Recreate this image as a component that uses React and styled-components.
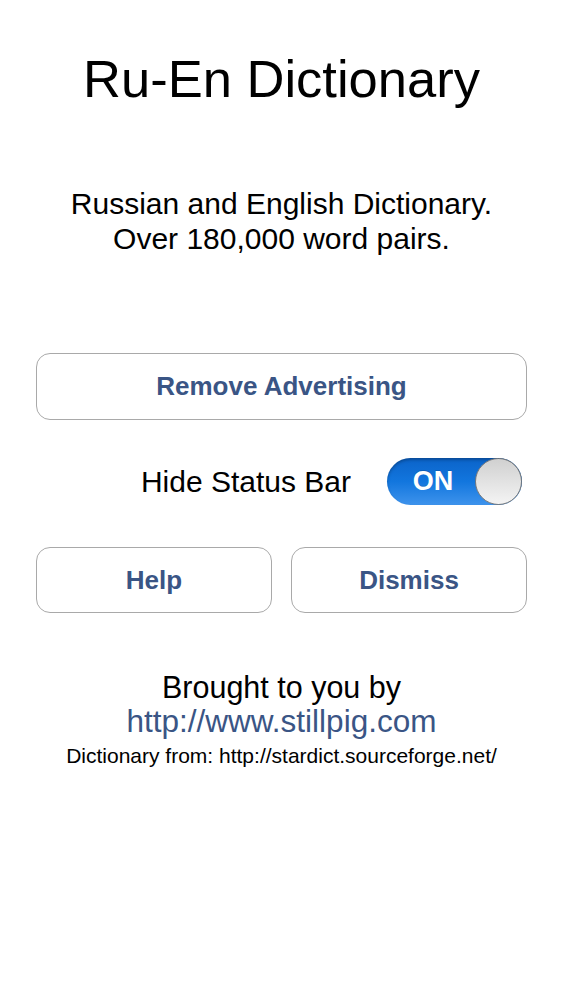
import React, { useState } from "react";
import styled, { createGlobalStyle } from "styled-components";

const GlobalStyle = createGlobalStyle`
  body {
    margin: 0;
    background: #fff;
    font-family: "Liberation Sans", Arial, Helvetica, sans-serif;
    color: #000;
  }
`;

const App = () => {
  const [hideBar, setHideBar] = useState(true);

  return (
    <>
      <GlobalStyle />
      <Page>
        <Title>Ru-En Dictionary</Title>
        <Subtitle>
          Russian and English Dictionary.
          <br />
          Over 180,000 word pairs.
        </Subtitle>
        <Actions>
          <RoundButton>Remove Advertising</RoundButton>
          <ToggleRow>
            <ToggleLabel>Hide Status Bar</ToggleLabel>
            <Switch $on={hideBar} onClick={() => setHideBar(!hideBar)}>
              <SwitchText>{hideBar ? "ON" : "OFF"}</SwitchText>
              <Knob />
            </Switch>
          </ToggleRow>
          <ButtonPair>
            <RoundButton $grow>Help</RoundButton>
            <RoundButton $grow>Dismiss</RoundButton>
          </ButtonPair>
        </Actions>
        <Credits>
          <CreditLine>Brought to you by</CreditLine>
          <Link>http://www.stillpig.com</Link>
          <SmallLine>Dictionary from: http://stardict.sourceforge.net/</SmallLine>
        </Credits>
      </Page>
    </>
  );
};

const Page = styled.div`
  display: flex;
  flex-direction: column;
  align-items: stretch;
  padding: 48px 36px 0;
  min-height: 1000px;
  box-sizing: border-box;
`;

const Title = styled.h1`
  margin: 0;
  text-align: center;
  font-size: 52.5px;
  font-weight: 400;
  line-height: 62px;
`;

const Subtitle = styled.p`
  margin: 76px 0 0;
  text-align: center;
  font-size: 30px;
  line-height: 35px;
`;

const Actions = styled.div`
  display: flex;
  flex-direction: column;
  margin-top: 97px;
`;

const RoundButton = styled.button`
  flex: ${(p) => (p.$grow ? 1 : "none")};
  height: 67px;
  border: 1.5px solid #a9a9a9;
  border-radius: 14px;
  background: #fff;
  color: #3a5585;
  font-family: "Liberation Sans", Arial, sans-serif;
  font-size: 26px;
  font-weight: 700;
  padding: 0;
  cursor: pointer;
`;

const ToggleRow = styled.div`
  display: flex;
  align-items: center;
  justify-content: flex-end;
  gap: 36px;
  margin-top: 38px;
  padding-right: 5px;
`;

const ToggleLabel = styled.span`
  font-size: 30px;
`;

const Switch = styled.div`
  position: relative;
  width: 135px;
  height: 47px;
  border-radius: 24px;
  box-sizing: border-box;
  background: ${(p) =>
    p.$on
      ? "linear-gradient(#0b63c9 0%, #1276de 50%, #3e93ec 100%)"
      : "linear-gradient(#e6e6e6, #fafafa)"};
  display: flex;
  align-items: center;
  box-shadow: inset 0 2px 3px rgba(0, 0, 0, 0.25);
  cursor: pointer;
`;

const SwitchText = styled.span`
  width: 92px;
  text-align: center;
  color: #fff;
  font-size: 27px;
  font-weight: 700;
  text-shadow: 0 -1px 0 rgba(0, 0, 0, 0.15);
`;

const Knob = styled.div`
  position: absolute;
  right: 0;
  top: 0;
  width: 47px;
  height: 47px;
  border-radius: 50%;
  box-sizing: border-box;
  border: 1.5px solid #7a7a7a;
  background: linear-gradient(#d0d0d0, #f4f4f4);
`;

const ButtonPair = styled.div`
  display: flex;
  gap: 19px;
  margin-top: 42px;

  ${RoundButton} {
    height: 66px;
  }
`;

const Credits = styled.div`
  display: flex;
  flex-direction: column;
  align-items: center;
  margin-top: 57px;
  text-align: center;
`;

const CreditLine = styled.div`
  font-size: 30.5px;
  line-height: 34px;
`;

const Link = styled.div`
  font-size: 31.5px;
  line-height: 34px;
  color: #3a5585;
`;

const SmallLine = styled.div`
  margin-top: 4px;
  font-size: 21px;
  line-height: 28px;
  white-space: nowrap;
`;

export default App;
